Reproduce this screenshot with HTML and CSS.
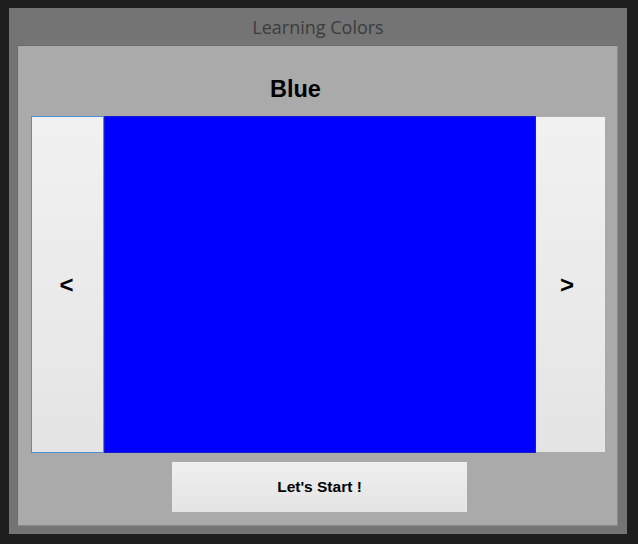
FILE: index.html
```html
<!DOCTYPE html>
<html>
<head>
<meta charset="utf-8">
<title>Learning Colors</title>
<link rel="stylesheet" href="styles.css">
</head>
<body>
<div class="window">
  <div class="titlebar">Learning Colors</div>
  <div class="client">
    <div class="color-name">Blue</div>
    <div class="carousel">
      <button class="nav nav-prev">&lt;</button>
      <div class="swatch"></div>
      <button class="nav nav-next">&gt;</button>
    </div>
    <div class="actions">
      <button class="start">Let's Start !</button>
    </div>
  </div>
</div>
</body>
</html>
```

FILE: styles.css
```css
html, body {
  margin: 0;
  padding: 0;
  background: #1e1e1e;
  width: 638px;
  height: 544px;
  overflow: hidden;
}

.window {
  margin: 8px 0 0 9px;
  width: 618px;
  height: 526px;
  background: #747474;
  display: flex;
  flex-direction: column;
  box-sizing: border-box;
  padding: 0 9px 8px 8px;
}

.titlebar {
  height: 37px;
  line-height: 38px;
  text-align: center;
  font-family: "Open Sans", "Noto Sans", sans-serif;
  font-size: 18px;
  color: #3c3c3c;
  padding-left: 1px;
}

.client {
  flex: 1;
  background: #aaaaaa;
  border: 1px solid #6a6a6a;
  border-right-color: #8a8a8a;
  border-bottom-color: #8a8a8a;
  display: flex;
  flex-direction: column;
  padding: 0 0 0 13px;
}

.color-name {
  height: 70px;
  box-sizing: border-box;
  padding-top: 27px;
  padding-left: 239px;
  font-family: "Liberation Sans", Arial, sans-serif;
  font-weight: bold;
  font-size: 23.5px;
  line-height: 32px;
  color: #000;
}

.carousel {
  display: flex;
  height: 337px;
}

.nav {
  font-family: "Liberation Sans", Arial, sans-serif;
  font-size: 24px;
  font-weight: bold;
  color: #000;
  background: linear-gradient(#f1f1f1, #e4e4e4);
  border: none;
  padding: 0;
  margin: 0;
  cursor: pointer;
}

.nav-prev {
  width: 73px;
  border: 1px solid #4a8fd6;
  height: 337px;
  padding-right: 2px;
}

.nav-next {
  width: 69px;
  margin-top: 1px;
  height: 335px;
  padding-right: 7px;
}

.swatch {
  width: 432px;
  background: #0000ff;
  border: 1px solid #1a1ad0;
  box-sizing: border-box;
}

.actions {
  display: flex;
  padding: 9px 0 0 141px;
}

.start {
  width: 295px;
  height: 50px;
  background: linear-gradient(#efefef, #e4e4e4);
  border: none;
  padding: 0;
  font-family: "Liberation Sans", Arial, sans-serif;
  font-weight: bold;
  font-size: 15.5px;
  color: #000;
  cursor: pointer;
}
```
